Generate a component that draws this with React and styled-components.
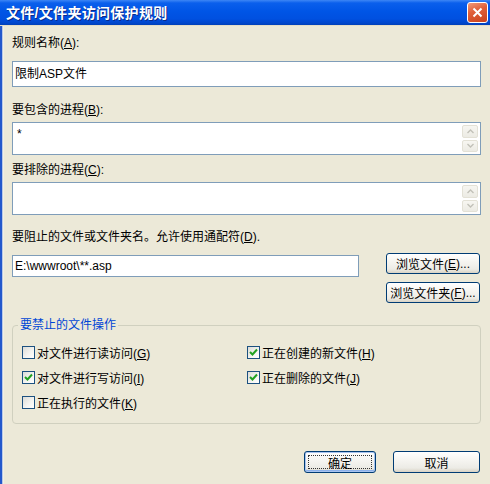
import React from "react";
import styled, { createGlobalStyle } from "styled-components";

const Global = createGlobalStyle`
  html, body { margin: 0; padding: 0; background: #ece9d8; }
  body { font-family: "Liberation Sans", "Noto Sans CJK SC", sans-serif; font-size: 12px; color: #000; }
  * { box-sizing: border-box; }
`;

const Window = styled.div`
  width: 490px;
  height: 484px;
  display: flex;
  flex-direction: column;
  background: #ece9d8;
  overflow: hidden;
`;

const TitleBar = styled.div`
  height: 26px;
  flex: none;
  display: flex;
  align-items: center;
  justify-content: space-between;
  padding: 0 2px 1px 6px;
  background: linear-gradient(180deg, #3d86f5 0%, #0a5fec 12%, #0055e6 45%, #0050e0 75%, #0046cc 92%, #0040b8 100%);
  border-bottom: 1px solid #e4ddc8;
`;

const Title = styled.div`
  color: #fff;
  font-weight: bold;
  font-size: 14px;
  letter-spacing: 0.3px;
  text-shadow: 1px 1px 0 #0a2a8a;
`;

const CloseBtn = styled.div`
  width: 21px;
  height: 21px;
  border: 1px solid #fff;
  border-radius: 3px;
  background: linear-gradient(160deg, #f19a7a 0%, #e0603a 40%, #c9421c 100%);
  display: flex;
  align-items: center;
  justify-content: center;
`;

const Body = styled.div`
  flex: 1;
  display: flex;
  flex-direction: column;
  border-left: 2px solid #2458cc;
  box-shadow: inset 1px 0 0 #b9c9e6, inset 2px 0 0 #f3efe2;
  padding: 10px 9px 0 10px;
`;

const Label = styled.div`
  height: 14px;
  line-height: 14px;
  margin-top: ${(p) => p.$mt || 0}px;
  white-space: nowrap;
`;

const Field = styled.div`
  margin-top: ${(p) => p.$mt || 0}px;
  height: ${(p) => p.$h}px;
  width: ${(p) => (p.$w ? p.$w + "px" : "100%")};
  border: 1px solid #7f9db9;
  background: #fff;
  display: flex;
  align-items: ${(p) => (p.$multi ? "stretch" : "center")};
`;

const FieldText = styled.div`
  flex: 1;
  padding: ${(p) => (p.$multi ? "4px 4px" : "0 2px")};
  line-height: 14px;
  white-space: nowrap;
`;

const ScrollCol = styled.div`
  width: 16px;
  margin: 2px 2px 2px 0;
  display: flex;
  flex-direction: column;
  gap: 2px;
`;

const ScrollBtn = styled.div`
  flex: 1;
  border: 1px solid #e3e1d6;
  border-radius: 2px;
  background: linear-gradient(180deg, #f7f6f1, #ecebe4);
  display: flex;
  align-items: center;
  justify-content: center;
`;

const Row = styled.div`
  margin-top: ${(p) => p.$mt || 0}px;
  display: flex;
  justify-content: space-between;
  align-items: flex-start;
`;

const ButtonCol = styled.div`
  display: flex;
  flex-direction: column;
  gap: 8px;
  margin-right: 1px;
`;

const Button = styled.div`
  position: relative;
  width: ${(p) => p.$w}px;
  height: ${(p) => p.$h || 21}px;
  border: 1px solid #003c74;
  border-radius: 3px;
  background: linear-gradient(180deg, #ffffff 0%, #f6f5f1 40%, #ecebe5 80%, #d8d2c4 100%);
  display: flex;
  align-items: center;
  justify-content: center;
  white-space: nowrap;
  box-shadow: ${(p) => (p.$default ? "inset 0 0 0 1px #a9c4ef, inset 0 -1px 0 1px #8bb0ea" : "none")};
  &::after {
    content: "";
    display: ${(p) => (p.$default ? "block" : "none")};
    position: absolute;
    inset: 3px;
    border: 1px dotted #333;
  }
`;

const Group = styled.fieldset`
  margin: ${(p) => p.$mt || 0}px 0 0 0;
  padding: 0 0 0 5px;
  height: 106px;
  border: 1px solid #d0d0bf;
  border-radius: 4px;
  min-width: 0;
`;

const Legend = styled.legend`
  color: #0046d5;
  padding: 0 2px;
  line-height: 14px;
`;

const CheckGrid = styled.div`
  display: grid;
  grid-template-columns: 225px 1fr;
  grid-auto-rows: 25px;
  margin: 8px 0 0 4px;
`;

const CheckItem = styled.div`
  display: flex;
  align-items: center;
  gap: 2px;
  white-space: nowrap;
`;

const Box = styled.span`
  width: 13px;
  height: 13px;
  flex: none;
  border: 1px solid #1c5180;
  background: linear-gradient(135deg, #dcdcd7 0%, #f5f5f2 60%, #ffffff 100%);
  display: flex;
  align-items: center;
  justify-content: center;
`;

const Footer = styled.div`
  margin-top: 27px;
  display: flex;
  justify-content: flex-end;
  gap: 17px;
  padding-right: 1px;
`;

const Check = ({ checked, children }) => (
  <CheckItem>
    <Box>
      {checked && (
        <svg width="9" height="9" viewBox="0 0 9 9">
          <path d="M1 4 L3.5 6.5 L8 1.5" stroke="#21a121" strokeWidth="2" fill="none" />
        </svg>
      )}
    </Box>
    <span>{children}</span>
  </CheckItem>
);

const Arrow = ({ up }) => (
  <svg width="7" height="5" viewBox="0 0 7 5">
    <path d={up ? "M0.5 4 L3.5 1 L6.5 4" : "M0.5 1 L3.5 4 L6.5 1"} stroke="#c2c1b8" strokeWidth="1.4" fill="none" />
  </svg>
);

const MultiField = ({ mt, children }) => (
  <Field $mt={mt} $h={33} $multi>
    <FieldText $multi>{children}</FieldText>
    <ScrollCol>
      <ScrollBtn><Arrow up /></ScrollBtn>
      <ScrollBtn><Arrow /></ScrollBtn>
    </ScrollCol>
  </Field>
);

export default function App() {
  return (
    <Window>
      <Global />
      <TitleBar>
        <Title>文件/文件夹访问保护规则</Title>
        <CloseBtn>
          <svg width="11" height="11" viewBox="0 0 11 11">
            <path d="M1.5 1.5 L9.5 9.5 M9.5 1.5 L1.5 9.5" stroke="#fff" strokeWidth="2" />
          </svg>
        </CloseBtn>
      </TitleBar>
      <Body>
        <Label>规则名称(<u>A</u>):</Label>
        <Field $mt={11} $h={26}>
          <FieldText>限制ASP文件</FieldText>
        </Field>
        <Label $mt={16}>要包含的进程(<u>B</u>):</Label>
        <MultiField mt={5}>*</MultiField>
        <Label $mt={8}>要排除的进程(<u>C</u>):</Label>
        <MultiField mt={5}></MultiField>
        <Label $mt={15}>要阻止的文件或文件夹名。允许使用通配符(<u>D</u>).</Label>
        <Row $mt={9}>
          <Field $mt={2} $h={22} $w={347}>
            <FieldText>E:\wwwroot\**.asp</FieldText>
          </Field>
          <ButtonCol>
            <Button $w={94}>浏览文件(<u>E</u>)...</Button>
            <Button $w={94}>浏览文件夹(<u>F</u>)...</Button>
          </ButtonCol>
        </Row>
        <Group $mt={15}>
          <Legend>要禁止的文件操作</Legend>
          <CheckGrid>
            <Check>对文件进行读访问(<u>G</u>)</Check>
            <Check checked>正在创建的新文件(<u>H</u>)</Check>
            <Check checked>对文件进行写访问(<u>I</u>)</Check>
            <Check checked>正在删除的文件(<u>J</u>)</Check>
            <Check>正在执行的文件(<u>K</u>)</Check>
          </CheckGrid>
        </Group>
        <Footer>
          <Button $w={72} $h={22} $default>确定</Button>
          <Button $w={87} $h={22}>取消</Button>
        </Footer>
      </Body>
    </Window>
  );
}
